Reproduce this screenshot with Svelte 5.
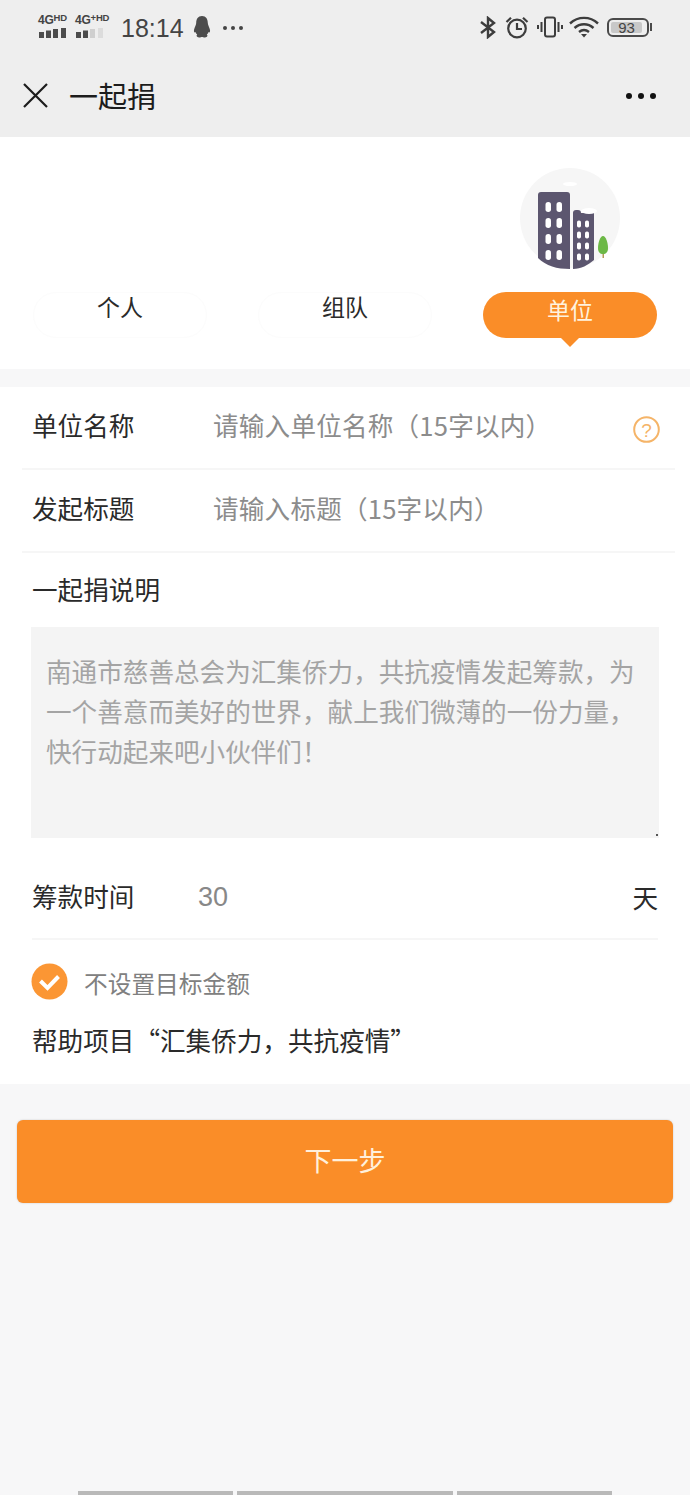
<script>
  const tabs = [
    { name: '个人', active: false },
    { name: '组队', active: false },
    { name: '单位', active: true }
  ];
  const windowRows = [0, 1, 2, 3];
</script>

<div class="page">
  <header class="top">
    <div class="status">
      <div class="status-left">
        <div class="net">
          <span class="net-label">4G<sup>HD</sup></span>
          <svg width="30" height="11" viewBox="0 0 30 11"><rect x="1" y="5" width="5" height="6" fill="#4c4c4c"/><rect x="8" y="3.500" width="5" height="7.500" fill="#4c4c4c"/><rect x="15" y="2" width="5" height="9" fill="#4c4c4c"/><rect x="23" y="1" width="5" height="10" fill="#4c4c4c"/></svg>
        </div>
        <div class="net">
          <span class="net-label">4G<sup>+HD</sup></span>
          <svg width="30" height="11" viewBox="0 0 30 11"><rect x="1" y="5" width="5" height="6" fill="#4c4c4c"/><rect x="8" y="3.500" width="5" height="7.500" fill="#4c4c4c"/><rect x="15" y="2" width="5" height="9" fill="#cfcfcf"/><rect x="23" y="1" width="5" height="10" fill="#dcdcdc"/></svg>
        </div>
        <span class="time">18:14</span>
        <svg class="qq" width="18" height="22" viewBox="0 0 18 22"><path d="M9 0C5 0 3.200 3 3.200 7 3.200 9 1.500 11 1 14c-.3 2 .6 3 1.400 2 .4 1 1 2 1.800 2.600C3 19.500 3.500 21.500 6 21.500c1.500 0 2.300-.5 3-.5s1.500.5 3 .5c2.500 0 3-2 1.800-2.900.8-.6 1.400-1.600 1.800-2.600.8 1 1.700 0 1.400-2-.5-3-2.200-5-2.200-7C14.800 3 13 0 9 0z" fill="#4c4c4c"/></svg>
        <span class="dots-small"><i></i><i></i><i></i></span>
      </div>
      <div class="status-right">
        <svg class="bt" width="16" height="23" viewBox="0 0 16 23" fill="none" stroke="#3d3d3d" stroke-width="2.400"><path d="M1 6l13 10-6 5V2l6 5L1 17"/></svg>
        <svg class="alarm" width="24" height="23" viewBox="0 0 24 23" fill="none" stroke="#3d3d3d" stroke-width="2.200"><circle cx="12" cy="12.500" r="8.800"/><path d="M12 7v6h5M1.500 6L6 1.800M22.500 6L18 1.800"/></svg>
        <svg class="vib" width="26" height="22" viewBox="0 0 26 22" fill="none" stroke="#3d3d3d" stroke-width="2"><rect x="8" y="1.500" width="10" height="19" rx="2"/><path d="M4.500 6v10M1 9v4M21.500 6v10M25 9v4"/></svg>
        <svg class="wifi" width="30" height="22" viewBox="0 0 30 22" fill="none" stroke="#3d3d3d" stroke-width="2.400"><path d="M1 7.500C9 0 21 0 29 7.500M5.500 12C11 7 19 7 24.500 12M10 16c3-2.400 7-2.400 10 0"/><path d="M12 18h6l-3 3.500z" fill="#3d3d3d" stroke="none"/></svg>
        <div class="battery"><div class="battery-body"><span class="battery-fill">93</span></div><i class="battery-tip"></i></div>
      </div>
    </div>
    <div class="nav">
      <svg class="close" width="26" height="26" viewBox="0 0 26 26" stroke="#1c1c1c" stroke-width="2.200" fill="none"><path d="M1 1l23 23M24 1L1 24"/></svg>
      <h1>一起捐</h1>
      <span class="dots-big"><i></i><i></i><i></i></span>
    </div>
  </header>

  <section class="picker">
    <div class="illustration">
      <svg width="104" height="106" viewBox="0 0 104 106">
        <circle cx="52" cy="52" r="50" fill="#f6f6f6"/>
        <ellipse cx="52" cy="18" rx="7" ry="2" fill="#fff"/>
        <path d="M20 29a3 3 0 0 1 3-3h26a3 3 0 0 1 3 3v74c-13 0-24-3-32-11z" fill="#5c566f"/>
        <path d="M55 47a3 3 0 0 1 3-3h2a3 3 0 0 1 3 3h13v47c-6 5-13 9-21 9z" fill="#5c566f"/>
        <ellipse cx="71" cy="45" rx="8" ry="3" fill="#fff"/>
        {#each windowRows as r}
          <rect x="27.500" y={36 + r * 16} width="5.500" height="10" rx="2.700" fill="#fff"/>
          <rect x="38.500" y={36 + r * 16} width="5.500" height="10" rx="2.700" fill="#fff"/>
          <rect x="59" y={54.500 + r * 11} width="4" height="7" rx="1.800" fill="#fff"/>
          <rect x="67" y={54.500 + r * 11} width="4" height="7" rx="1.800" fill="#fff"/>
        {/each}
        <rect x="84.500" y="84" width="1.500" height="8" fill="#b59a5a"/>
        <path d="M85 70c3 0 5 7 5 12 0 4-2 6-5 6s-5-2-5-6c0-5 2-12 5-12z" fill="#6cb846"/>
      </svg>
    </div>
    <div class="tabs">
      {#each tabs as tab}
        <div class="tab" class:active={tab.active}>{tab.name}</div>
      {/each}
    </div>
  </section>

  <section class="form">
    <div class="row first">
      <span class="label">单位名称</span>
      <span class="placeholder">请输入单位名称（15字以内）</span>
      <svg class="help" width="27" height="27" viewBox="0 0 27 27" fill="none"><circle cx="13.500" cy="13.500" r="12.300" stroke="#f5b468" stroke-width="2"/><text x="13.500" y="20.500" text-anchor="middle" font-size="19" fill="#f5b468" font-family="Liberation Sans, sans-serif">?</text></svg>
    </div>
    <div class="row">
      <span class="label">发起标题</span>
      <span class="placeholder">请输入标题（15字以内）</span>
    </div>
    <div class="desc">
      <div class="desc-label">一起捐说明</div>
      <div class="textarea">南通市慈善总会为汇集侨力，共抗疫情发起筹款，为一个善意而美好的世界，献上我们微薄的一份力量，快行动起来吧小伙伴们！</div>
    </div>
    <div class="row time-row">
      <span class="label">筹款时间</span>
      <span class="days">30</span>
      <span class="unit">天</span>
    </div>
    <div class="check-row">
      <svg width="38" height="38" viewBox="0 0 38 38"><circle cx="18.500" cy="18.500" r="18" fill="#fb9634"/><path d="M9.500 18l7 7L27.500 13.500" fill="none" stroke="#fff" stroke-width="4"/></svg>
      <span>不设置目标金额</span>
    </div>
    <div class="help-line">帮助项目“汇集侨力，共抗疫情”</div>
  </section>

  <div class="action">
    <button class="next">下一步</button>
  </div>

  <div class="home-bar"><i></i><i class="mid"></i><i></i></div>
</div>

<style>
  :global(body) {
    margin: 0;
    background: #f7f7f8;
  }

  .page {
    width: 690px;
    height: 1495px;
    overflow: hidden;
    display: flex;
    flex-direction: column;
    background: #f7f7f8;
    color: #2a2a2a;
    font-family: "Noto Sans CJK SC", "Liberation Sans", sans-serif;
    position: relative;
  }

  .top {
    height: 137px;
    background: #eeeeee;
    box-sizing: border-box;
    padding-top: 10px;
  }

  .status {
    height: 34px;
    display: flex;
    justify-content: space-between;
    align-items: center;
    padding: 0 38px 0 38px;
  }

  .status-left, .status-right {
    display: flex;
    align-items: center;
  }

  .alarm { margin-left: 9px; }
  .vib { margin-left: 8px; }
  .wifi { margin-left: 6px; }

  .net {
    width: 37px;
    display: flex;
    flex-direction: column;
    gap: 1px;
    color: #444;
    margin-top: -3px;
  }

  .net-label {
    font: 700 12px/12px "Liberation Sans", sans-serif;
    white-space: nowrap;
    letter-spacing: -0.2px;
  }

  .net-label sup {
    font-size: 9.500px;
    line-height: 0;
    vertical-align: 3px;
  }

  .time {
    font: 25px/30px "Liberation Sans", sans-serif;
    color: #444;
    margin-left: 9px;
    margin-top: 2px;
  }

  .qq {
    margin-left: 9px;
  }

  .dots-small {
    display: flex;
    gap: 4px;
    margin-left: 12px;
    margin-top: 1px;
  }

  .dots-small i {
    width: 4px;
    height: 4px;
    border-radius: 50%;
    background: #444;
  }

  .battery {
    display: flex;
    align-items: center;
    margin-left: 8px;
  }

  .battery-body {
    width: 42px;
    height: 19px;
    box-sizing: border-box;
    border: 2px solid #4a4a4a;
    border-radius: 6px;
    padding: 2px 5px 2px 2px;
    display: flex;
  }

  .battery-fill {
    flex: 1;
    background: #c8c8c8;
    border-radius: 2px;
    font: 15px/11px "Liberation Sans", sans-serif;
    color: #444;
    text-align: center;
  }

  .battery-tip {
    width: 2px;
    height: 8px;
    background: #4a4a4a;
    margin-left: 1px;
  }

  .nav {
    height: 93px;
    box-sizing: border-box;
    padding: 9px 34px 0 23px;
    display: flex;
    align-items: center;
  }

  .close {
    margin-top: 1px;
  }

  .nav h1 {
    margin: 0 0 0 20px;
    flex: 1;
    font-size: 29px;
    font-weight: 400;
    color: #1c1c1c;
  }

  .dots-big {
    display: flex;
    gap: 6px;
    margin-top: 2px;
  }

  .dots-big i {
    width: 6px;
    height: 6px;
    border-radius: 50%;
    background: #111;
  }

  .picker {
    height: 232px;
    background: #fff;
    box-sizing: border-box;
    position: relative;
  }

  .illustration {
    position: absolute;
    left: 518px;
    top: 29px;
    line-height: 0;
  }

  .tabs {
    position: absolute;
    left: 33px;
    top: 155px;
    display: flex;
    gap: 51px;
  }

  .tab {
    width: 174px;
    height: 46px;
    box-sizing: border-box;
    border-radius: 23px;
    text-align: center;
    font-size: 23px;
    line-height: 26px;
    color: #2a2a2a;
    border: 1px solid #fcfcfc;
  }

  .tab.active {
    background: #fa8d28;
    border: none;
    color: #fff3df;
    line-height: 35px;
    position: relative;
  }

  .tab.active::after {
    content: "";
    position: absolute;
    left: 78px;
    bottom: -9px;
    border: 9px solid transparent;
    border-bottom: 0;
    border-top-color: #fa8d28;
  }

  .form {
    margin-top: 18px;
    height: 697px;
    background: #fff;
    box-sizing: border-box;
    padding: 0 32px;
    display: flex;
    flex-direction: column;
  }

  .row {
    height: 83px;
    display: flex;
    align-items: center;
    box-sizing: border-box;
    border-bottom: 2px solid #f6f6f6;
    margin: 0 -17px 0 -10px;
    padding: 0 17px 7px 10px;
    position: relative;
  }

  .label {
    width: 181px;
    flex: none;
    font-size: 25.600px;
    color: #2a2a2a;
  }

  .placeholder {
    font-size: 25.600px;
    letter-spacing: 0.2px;
    color: #8c8c8c;
    white-space: nowrap;
    flex: 1;
  }

  .help {
    position: absolute;
    right: 15px;
    top: 29px;
  }

  .desc-label {
    font-size: 25.600px;
    line-height: 36px;
    padding-top: 18px;
  }

  .textarea {
    margin-top: 20px;
    height: 211px;
    background: #f4f4f4;
    box-sizing: border-box;
    padding: 24px 15px;
    font-size: 25.600px;
    line-height: 40px;
    color: #a4a4a4;
    margin-right: -1px;
    margin-left: -1px;
    position: relative;
  }

  .textarea::after {
    content: "";
    position: absolute;
    right: 1px;
    bottom: 2px;
    width: 2px;
    height: 2px;
    background: #555;
  }

  .time-row {
    height: 102px;
    margin: 0;
    padding: 15px 0 0;
  }

  .time-row .label {
    width: 166px;
  }

  .days {
    flex: 1;
    color: #888;
    font: 27px "Liberation Sans", sans-serif;
    padding-top: 4px;
  }

  .unit {
    font-size: 25.600px;
    color: #2a2a2a;
    padding-top: 2px;
  }

  .check-row {
    display: flex;
    align-items: center;
    gap: 15px;
    margin: 23px 0 0 -1px;
    color: #808080;
    font-size: 23.700px;
  }

  .check-row span {
    padding-top: 2px;
  }

  .help-line {
    margin-top: 21px;
    font-size: 25.600px;
    line-height: 36px;
    color: #2a2a2a;
  }

  .action {
    padding: 36px 17px 0;
  }

  .next {
    display: block;
    width: 100%;
    height: 83px;
    padding: 0 0 4px;
    border: none;
    border-radius: 6px;
    background: #fa8d28;
    color: #fff0dc;
    font: 400 27px "Noto Sans CJK SC", sans-serif;
    box-shadow: 0 0 2px rgba(0, 0, 0, 0.2);
  }

  .home-bar {
    position: absolute;
    left: 78px;
    bottom: 0;
    display: flex;
    gap: 4px;
  }

  .home-bar i {
    width: 155px;
    height: 4px;
    background: #b9b9b9;
  }

  .home-bar i.mid {
    width: 216px;
  }
</style>
